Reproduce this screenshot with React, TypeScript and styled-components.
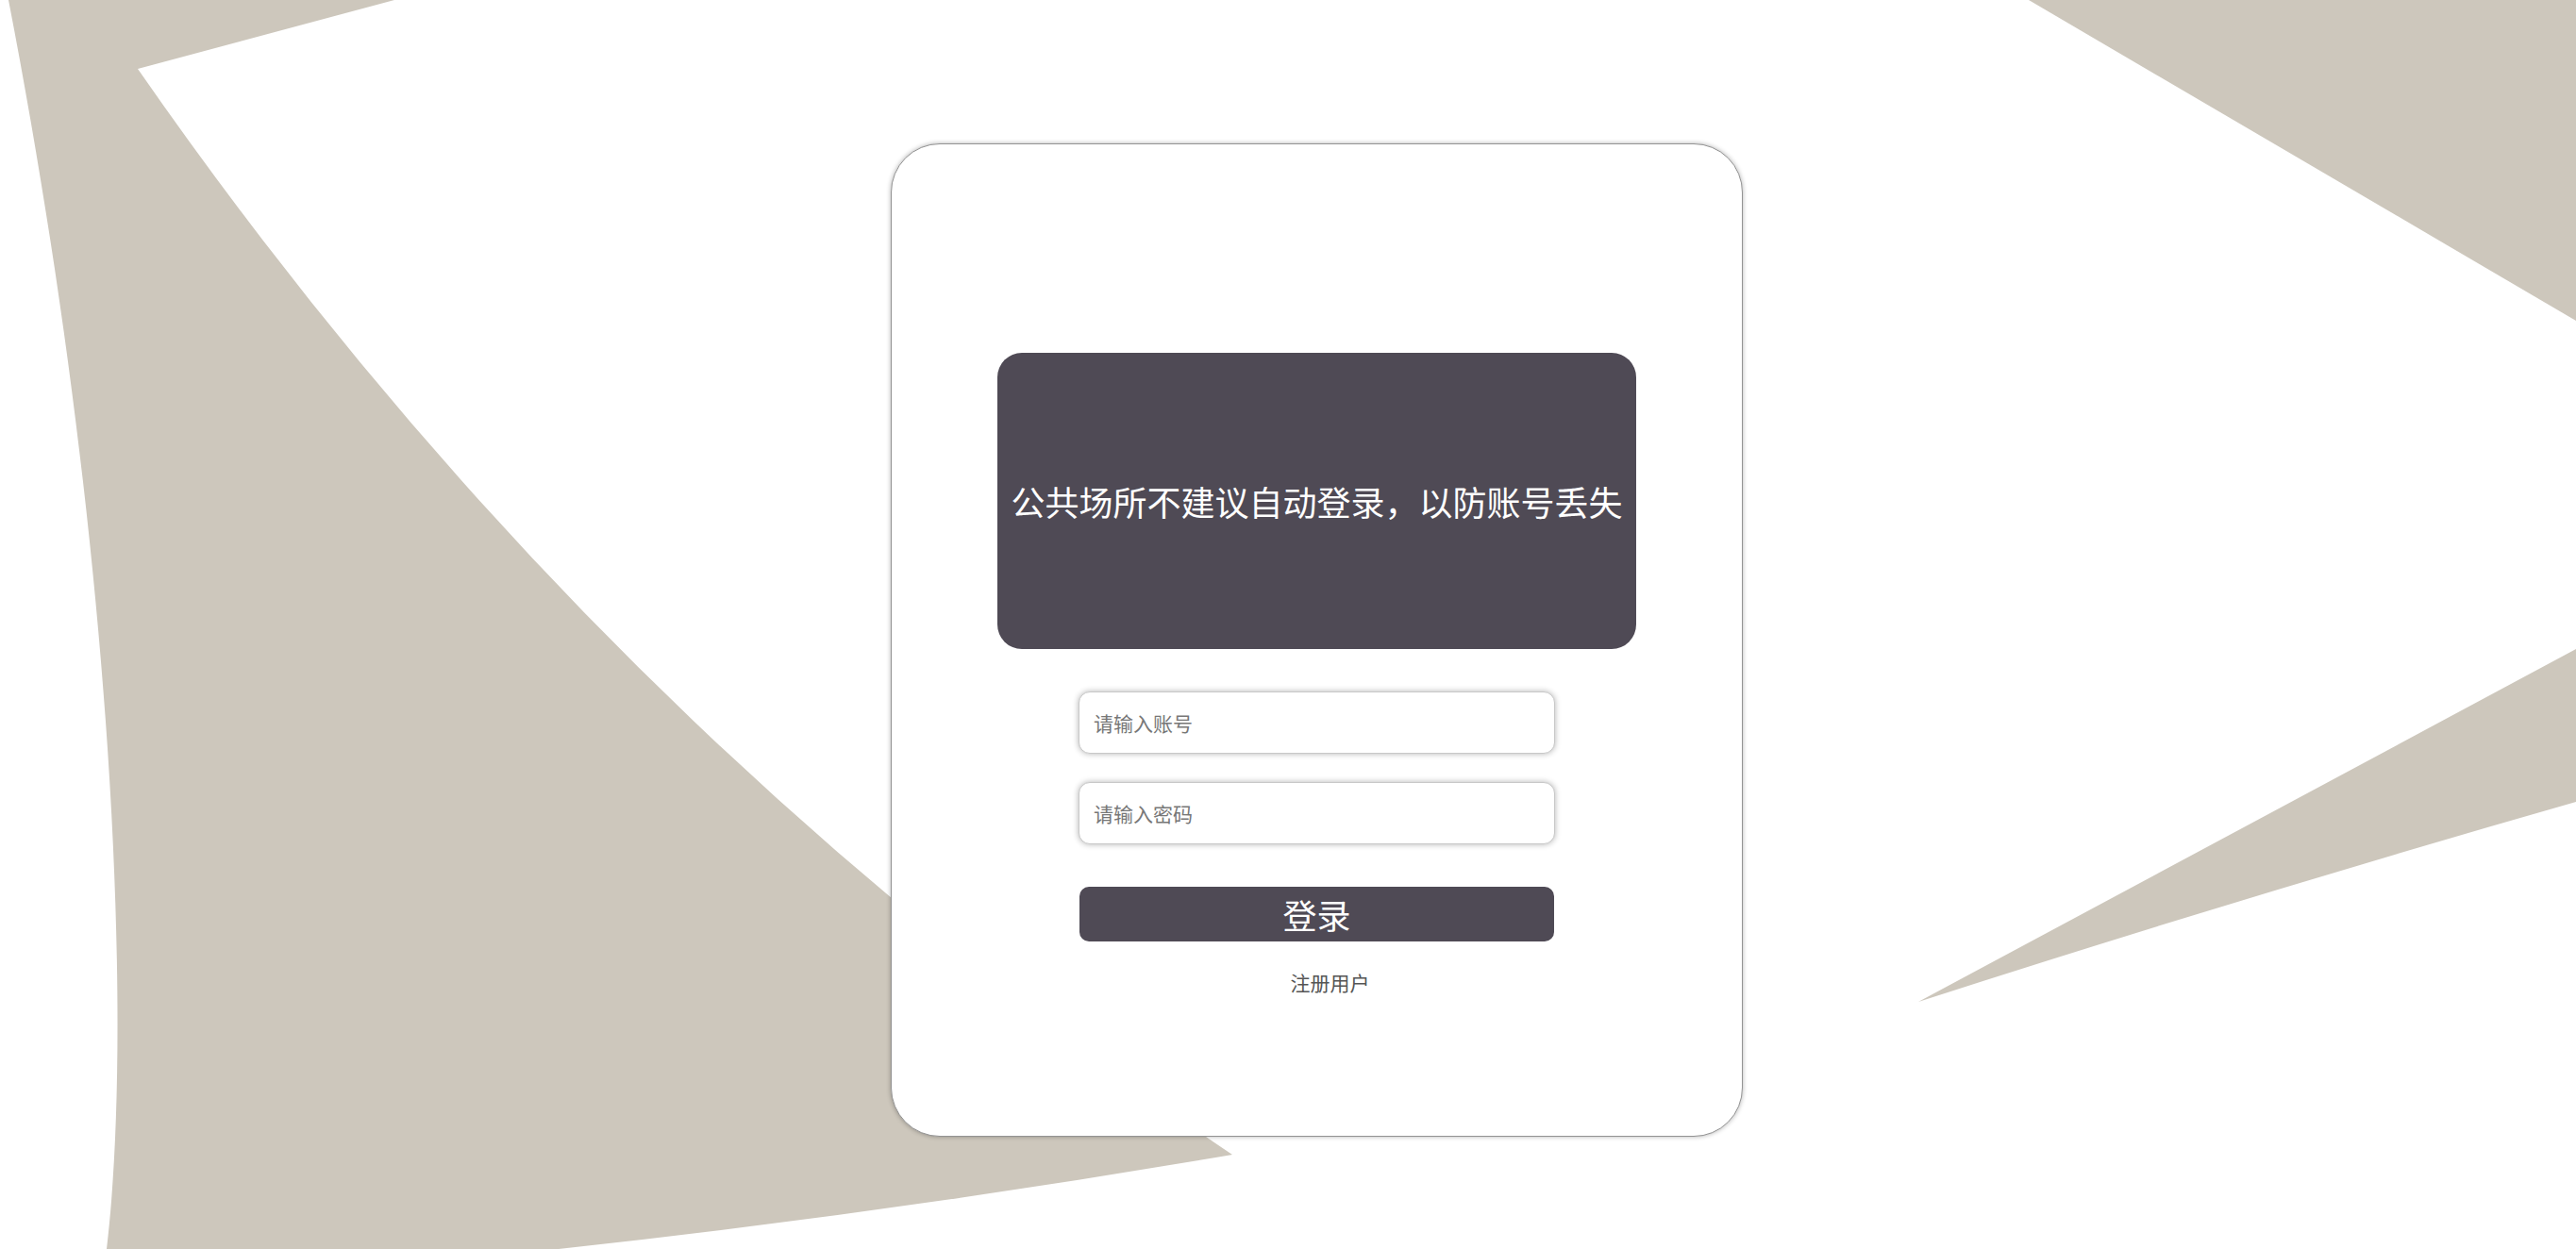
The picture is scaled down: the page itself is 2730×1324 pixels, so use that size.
import styled, { createGlobalStyle } from "styled-components";

const GlobalStyle = createGlobalStyle`
  html, body {
    margin: 0;
    padding: 0;
    width: 100%;
    height: 100%;
    background: #fff;
    overflow: hidden;
  }
  #root {
    width: 100%;
    height: 100%;
  }
`;

const Layout = styled.div`
  position: relative;
  width: 100%;
  height: 100%;
  box-sizing: border-box;
  display: flex;
  flex-direction: column;
  align-items: flex-start;
  padding: 152px 0 0 944px;
  font-family: "Noto Sans CJK SC", "Liberation Sans", sans-serif;
`;

const Backdrop = styled.svg`
  position: absolute;
  inset: 0;
  width: 100%;
  height: 100%;
  z-index: 0;
`;

const Card = styled.div`
  position: relative;
  z-index: 1;
  width: 903px;
  height: 1053px;
  box-sizing: border-box;
  display: flex;
  flex-direction: column;
  align-items: center;
  padding-top: 221px;
  background: #fff;
  border: 1.5px solid #939393;
  border-radius: 52px;
  box-shadow: 0 0 5px rgba(0, 0, 0, 0.3);
`;

const Notice = styled.div`
  width: 677px;
  height: 314px;
  display: flex;
  align-items: center;
  justify-content: center;
  background: #4f4a55;
  border-radius: 26px;
  color: #fff;
  font-size: 36px;
  line-height: 44px;
  margin-bottom: 45px;
`;

const Input = styled.input<{ $gap: number }>`
  width: 505px;
  height: 66px;
  box-sizing: border-box;
  padding: 0 15px;
  margin-bottom: ${(p) => p.$gap}px;
  border: 1.5px solid #c8c8c8;
  border-radius: 12px;
  box-shadow: 0 0 6px rgba(0, 0, 0, 0.3);
  outline: none;
  font-family: inherit;
  font-size: 21px;
  color: #333;
  background: #fff;

  &::placeholder {
    color: #777;
  }
`;

const LoginButton = styled.button`
  width: 503px;
  height: 58px;
  border: none;
  border-radius: 10px;
  background: #4f4a55;
  color: #fff;
  font-family: inherit;
  font-size: 36px;
  line-height: 58px;
  padding: 0;
  cursor: pointer;
  margin-bottom: 29px;
`;

const RegisterLink = styled.span`
  margin-left: 28px;
  font-size: 21px;
  line-height: 28px;
  color: #555;
  cursor: pointer;
`;

const App = () => {
  return (
    <>
      <GlobalStyle />
      <Layout>
        <Backdrop viewBox="0 0 2730 1324" preserveAspectRatio="none">
          <path
            fill="#cdc7bc"
            d="M 9 0 L 418 0 L 146 73 Q 627 766 1306 1224 Q 950 1285 592 1324 L 113 1324 C 140 1100 125 600 9 0 Z"
          />
          <path fill="#cdc7bc" d="M 2150 0 L 2730 0 L 2730 340 Z" />
          <path
            fill="#cdc7bc"
            d="M 2033 1062 L 2730 688 L 2730 850 Q 2380 950 2033 1062 Z"
          />
        </Backdrop>
        <Card>
          <Notice>公共场所不建议自动登录，以防账号丢失</Notice>
          <Input $gap={30} type="text" placeholder="请输入账号" />
          <Input $gap={45} type="password" placeholder="请输入密码" />
          <LoginButton>登录</LoginButton>
          <RegisterLink>注册用户</RegisterLink>
        </Card>
      </Layout>
    </>
  );
};

export default App;
